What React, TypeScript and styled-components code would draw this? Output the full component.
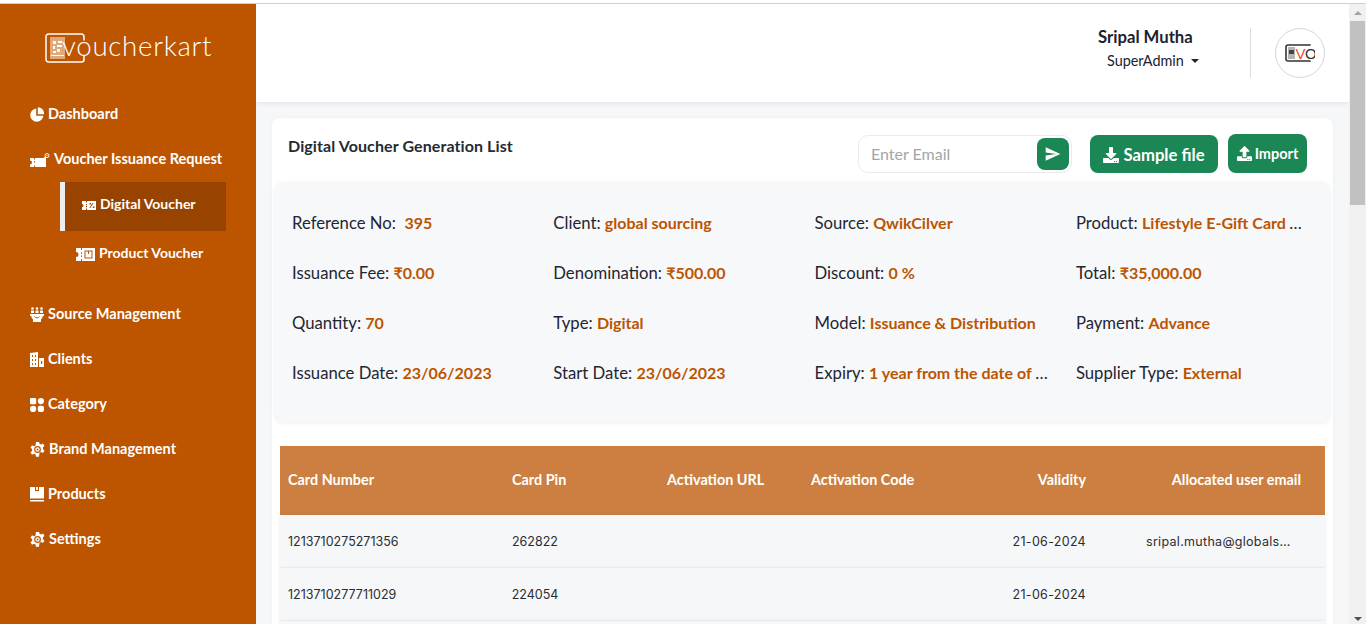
import React from 'react';
import styled, { createGlobalStyle } from 'styled-components';
import { FaDownload, FaUpload } from 'react-icons/fa';
import { IoMdSend } from 'react-icons/io';

const GlobalStyle = createGlobalStyle`
  html, body {
    margin: 0;
    padding: 0;
    height: 624px;
    overflow: hidden;
    background: #fff;
    font-family: "Lato", "Open Sans", sans-serif;
  }
  * { box-sizing: border-box; }
`;

const Page = styled.div`
  height: 624px;
  display: flex;
  flex-direction: column;
  overflow: hidden;
`;

const TopLine = styled.div`
  flex: 0 0 4px;
  background: #fff;
  border-bottom: 1px solid #cfcfcf;
`;

const Body = styled.div`
  flex: 1;
  display: flex;
  min-height: 0;
`;

const Sidebar = styled.aside`
  flex: 0 0 256px;
  background: #bc5400;
  color: #fff;
`;

const Logo = styled.div`
  display: flex;
  align-items: center;
  height: 30px;
  margin: 29px 0 0 45px;
`;

const LogoText = styled.span`
  font-size: 27.7px;
  font-weight: 300;
  letter-spacing: 0.7px;
  margin-left: -23px;
  padding-bottom: 4px;
  line-height: 30px;
  color: #fff;
`;

const Nav = styled.nav`
  margin-top: 29px;
  display: flex;
  flex-direction: column;
`;

const NavItem = styled.div`
  display: flex;
  align-items: center;
  height: 45px;
  padding: 0 0 2px 30px;
  gap: 4px;
  font-size: 14.5px;
  font-weight: 700;
  color: #fff;
  svg {
    flex: none;
    margin-top: 2px;
  }
`;

const SubItem = styled.div<{ $active?: boolean }>`
  display: flex;
  align-items: center;
  width: 166px;
  height: 49px;
  margin-left: 60px;
  padding: 0 0 6px ${(p) => (p.$active ? 17 : 11)}px;
  gap: 4px;
  font-size: 14px;
  font-weight: 700;
  color: #fff;
  background: ${(p) => (p.$active ? '#984300' : 'transparent')};
  border-left: 5px solid ${(p) => (p.$active ? '#eeeeee' : 'transparent')};
  svg {
    flex: none;
    margin-top: 3px;
  }
`;

const NavSpacer = styled.div`
  height: 12px;
`;

const Main = styled.main`
  flex: 1;
  min-width: 0;
  background: #f6f7f9;
  overflow: hidden;
`;

const Header = styled.header`
  height: 98px;
  background: #fff;
  box-shadow: 0 1px 6px rgba(30, 40, 60, 0.1);
  display: flex;
  align-items: center;
  justify-content: flex-end;
  padding-right: 24px;
`;

const UserBox = styled.div`
  width: 102px;
  margin: 0 50px 8px 0;
  display: flex;
  flex-direction: column;
  align-items: flex-start;
  color: #1b2230;
`;

const UserName = styled.div`
  font-size: 16.7px;
  font-weight: 700;
  line-height: 22px;
  white-space: nowrap;
`;

const UserRole = styled.div`
  display: flex;
  align-items: center;
  gap: 7px;
  font-size: 14.4px;
  line-height: 22px;
  margin: 2px 0 0 9px;
`;

const Caret = styled.span`
  width: 0;
  height: 0;
  border-left: 4px solid transparent;
  border-right: 4px solid transparent;
  border-top: 4px solid #222;
`;

const Divider = styled.div`
  width: 1px;
  height: 50px;
  background: #dcdee2;
  margin-right: 24px;
`;

const Avatar = styled.div`
  width: 50px;
  height: 50px;
  border-radius: 50%;
  border: 1px solid #d6d6d6;
  background: #fff;
  display: flex;
  align-items: center;
  justify-content: center;
`;

const Card = styled.section`
  margin: 16px 16px 0;
  background: #fff;
  border-radius: 8px;
  box-shadow: 0 0 4px rgba(30, 40, 60, 0.04);
`;

const CardHead = styled.div`
  height: 64px;
  display: flex;
  align-items: flex-start;
  padding: 16px 26px 0 16px;
`;

const Title = styled.h2`
  flex: 1;
  margin: 1px 0 0;
  font-size: 16px;
  font-weight: 700;
  letter-spacing: 0.1px;
  line-height: 22px;
  color: #252a33;
`;

const EmailBox = styled.div`
  width: 214px;
  height: 38px;
  margin-top: 1px;
  display: flex;
  align-items: center;
  padding: 0 2px 0 12px;
  border: 1px solid #e9ebee;
  border-radius: 10px;
  background: #fff;
`;

const EmailInput = styled.input`
  flex: 1;
  min-width: 0;
  padding: 0;
  margin-bottom: 2px;
  border: 0;
  outline: 0;
  background: transparent;
  font-family: inherit;
  font-size: 16px;
  color: #333;
  &::placeholder { color: #a3a5a8; opacity: 1; }
`;

const SendButton = styled.button`
  width: 32px;
  height: 32px;
  padding: 0;
  border: 0;
  border-radius: 8px;
  background: #1a8754;
  color: #fff;
  display: flex;
  align-items: center;
  justify-content: center;
`;

const ActionButton = styled.button<{ $small?: boolean }>`
  height: ${(p) => (p.$small ? 39 : 38)}px;
  width: ${(p) => (p.$small ? 79 : 128)}px;
  margin-left: ${(p) => (p.$small ? 10 : 18)}px;
  margin-top: ${(p) => (p.$small ? 0 : 1)}px;
  padding: ${(p) => (p.$small ? 0 : '2px 0 0')};
  border: 0;
  border-radius: 8px;
  background: #1a8754;
  color: #fff;
  font-family: inherit;
  font-weight: 700;
  font-size: ${(p) => (p.$small ? 14.5 : 16.7)}px;
  display: flex;
  align-items: center;
  justify-content: center;
  gap: ${(p) => (p.$small ? 3 : 4)}px;
`;

const InfoPanel = styled.div`
  margin: 0 3px;
  height: 240px;
  padding: 16px 0 0 17px;
  background: #f7f8fa;
  border-radius: 8px;
  box-shadow: 0 1px 4px rgba(30, 40, 60, 0.08);
  display: grid;
  grid-template-columns: repeat(4, 261.3px);
  grid-auto-rows: 50px;
`;

const InfoCell = styled.div`
  max-width: 235px;
  line-height: 50px;
  white-space: nowrap;
  overflow: hidden;
  text-overflow: ellipsis;
  font-size: 16.7px;
  color: #1f2633;
`;

const InfoValue = styled.span`
  color: #bc5400;
  font-size: 16px;
  font-weight: 700;
`;

const Table = styled.div`
  margin: 24px 8px 0;
`;

const COLUMNS = '231px 156px 144px 160px 115px 239px';

const HeadRow = styled.div`
  height: 69px;
  padding-bottom: 2px;
  display: grid;
  grid-template-columns: ${COLUMNS};
  align-items: center;
  background: #cc7f40;
  color: #fff;
  font-size: 14.4px;
  font-weight: 700;
`;

const DataRow = styled.div`
  height: 53px;
  display: grid;
  grid-template-columns: ${COLUMNS};
  align-items: center;
  background: #f6f7f9;
  border-bottom: 1px solid #f1f2f4;
  box-shadow: 0 0 3px rgba(30, 40, 60, 0.1);
  color: #2b2d31;
  font-family: "Inter", "Lato", sans-serif;
  font-size: 12.5px;
`;

const Cell = styled.div<{ $align?: string; $pad?: string }>`
  text-align: ${(p) => p.$align ?? 'left'};
  padding: ${(p) => p.$pad ?? '0'};
  min-width: 0;
  white-space: nowrap;
`;

const PinValue = styled.span`
  display: inline-block;
  width: 48px;
  text-align: center;
`;

const DateValue = styled.span`
  letter-spacing: 0.3px;
`;

const EmailValue = styled.span`
  display: inline-block;
  width: 151px;
  letter-spacing: 0.3px;
  overflow: hidden;
  text-overflow: ellipsis;
  vertical-align: bottom;
`;

const Scrollbar = styled.div`
  flex: 0 0 17px;
  background: #f1f1f1;
  display: flex;
  flex-direction: column;
  align-items: center;
`;

const ArrowUp = styled.span`
  margin-top: 7px;
  width: 0;
  height: 0;
  border-left: 4px solid transparent;
  border-right: 4px solid transparent;
  border-bottom: 4px solid #a3a3a3;
`;

const Thumb = styled.div`
  width: 15px;
  height: 184px;
  margin-top: 6px;
  background: #c1c1c1;
`;

const ArrowDown = styled.span`
  margin-top: auto;
  margin-bottom: 3px;
  width: 0;
  height: 0;
  border-left: 4px solid transparent;
  border-right: 4px solid transparent;
  border-top: 4px solid #505050;
`;

const LogoMark = () => (
  <svg width="40" height="30" viewBox="0 0 40 30" fill="none">
    <path d="M39 7.5V3.5A2.5 2.5 0 0 0 36.5 1H3.5A2.5 2.5 0 0 0 1 3.5V26.5A2.5 2.5 0 0 0 3.5 29H36.5A2.5 2.5 0 0 0 39 26.5V23" stroke="#fff" strokeWidth="1.5" />
    <rect x="5" y="4" width="15" height="22" fill="#e2a878" />
    <path d="M8 8h3v3H8zM13 8h4v2h-4zM8 13h2v3H8zM12 12h5v2h-5zM12 16h3v3h-3zM8 18h3v2H8zM6 22h13v1H6z" fill="#fff" />
  </svg>
);

const PieIcon = () => (
  <svg width="14" height="15" viewBox="0 0 14 15" fill="#fff">
    <path d="M6.2 1.6A6.6 6.6 0 1 0 13.4 8.8H6.2z" />
    <path d="M7.8 0.2A6.4 6.4 0 0 1 14 7.2H7.8z" />
  </svg>
);

const RequestIcon = () => (
  <svg width="20" height="14" viewBox="0 0 20 14" fill="#fff">
    <path d="M0 5h4v1.5h1V5h8l3-1.5V14H5v-1.5H4V14H0v-2.5a2 2 0 0 0 0-4z" />
    <path d="M4 8h1v1.5H4z" fill="#bc5400" />
    <circle cx="17" cy="2.6" r="2" fill="none" stroke="#fff" strokeWidth="1" />
    <circle cx="17" cy="2.6" r="0.6" />
  </svg>
);

const DigitalIcon = () => (
  <svg width="14" height="9" viewBox="0 0 14 9" fill="#fff">
    <path d="M0 0h4v1.5h1V0h9v9H5V7.5H4V9H0V6a1.5 1.5 0 0 0 0-3z" />
    <path d="M4 3h1v1.2H4zM4 5h1v1.2H4z" fill="#984300" />
    <path d="M7.5 2h1.6v1.6H7.5zM10.8 5.4h1.6V7h-1.6zM10.6 2h1L8.3 7h-1z" fill="#984300" />
  </svg>
);

const ProductIcon = () => (
  <svg width="19" height="13" viewBox="0 0 19 13" fill="#fff">
    <path d="M0 0h5v2h1V0h13v13H6v-2H5v2H0V9a2.5 2.5 0 0 0 0-5z" />
    <path d="M5 4.5h1V6H5zM5 7.5h1V9H5z" fill="#bc5400" />
    <path d="M8.5 2.5h8v8h-8z" fill="#bc5400" />
    <path d="M9.5 3.5h2.5v2.5h1V3.5h2.5v6h-6z" />
  </svg>
);

const SourceIcon = () => (
  <svg width="14" height="15" viewBox="0 0 14 15" fill="#fff">
    <circle cx="2.5" cy="1.5" r="1.3" />
    <circle cx="7" cy="1.5" r="1.3" />
    <circle cx="11.5" cy="1.5" r="1.3" />
    <path d="M1 3.5h3v2.5H1zM5.5 3.5h3v2.5h-3zM10 3.5h3v2.5h-3z" />
    <path d="M0 7h14v2h-1.2a6 6 0 0 1-1.8 3.5V15H3v-2.5A6 6 0 0 1 1.2 9H0z" />
    <path d="M4.5 9.5a3 3 0 0 0 5 0" stroke="#bc5400" strokeWidth="1" fill="none" />
  </svg>
);

const BuildingIcon = () => (
  <svg width="14" height="15" viewBox="0 0 14 15" fill="#fff">
    <path d="M0 1l8-1v15H0z" />
    <path d="M9 6h5v9H9z" />
    <path d="M2 3h1v2H2zM5 3h1v2H5zM2 7h1v2H2zM5 7h1v2H5zM2 11h1v2H2zM5 11h1v2H5zM11 9h1.2v3H11z" fill="#bc5400" />
  </svg>
);

const CategoryIcon = () => (
  <svg width="14" height="14" viewBox="0 0 14 14" fill="#fff">
    <rect x="0" y="0" width="6.2" height="6.2" rx="1" />
    <circle cx="10.9" cy="3.1" r="3.1" />
    <circle cx="3.1" cy="10.9" r="3.1" />
    <rect x="7.8" y="7.8" width="6.2" height="6.2" rx="2" />
  </svg>
);

const GearIcon = () => (
  <svg width="15" height="15" viewBox="0 0 15 15" fill="#fff">
    <path d="M6 0h3l.5 2 1.6.7L13 1.8l1.5 2.4-1.6 1.3v2l1.6 1.3-1.5 2.4-1.9-.9-1.6.8L9 15H6l-.5-2.1-1.6-.8-1.9.9L.5 10.6l1.6-1.3v-2L.5 6 2 3.6l1.9.9 1.6-.8z" transform="translate(0 -.3)" />
    <circle cx="7.5" cy="7.5" r="3.4" fill="#bc5400" />
    <circle cx="7.5" cy="7.5" r="2.2" fill="#fff" />
    <circle cx="7.5" cy="7.5" r="1" fill="#bc5400" />
  </svg>
);

const BoxIcon = () => (
  <svg width="14" height="15" viewBox="0 0 14 15" fill="#fff">
    <path d="M0 0h5v4h4V0h5v11.5H0zM0 13h14v1.5H0z" />
    <path d="M6 0h2v3H6z" />
  </svg>
);

const AvatarLogo = () => (
  <svg width="30" height="18" viewBox="0 0 30 18">
    <path d="M25 1.5V1H3a2 2 0 0 0-2 2v12a2 2 0 0 0 2 2h22v-.5" fill="none" stroke="#333" strokeWidth="1.6" />
    <rect x="3" y="3" width="7" height="12" fill="#b5b5b5" />
    <path d="M4 6h5v4H4z" fill="#444" />
    <text x="10.5" y="14.5" fontFamily="Liberation Sans, sans-serif" fontSize="15" fill="#e8502a">V</text>
    <text x="20" y="14.5" fontFamily="Liberation Sans, sans-serif" fontSize="15" fill="#333">O</text>
  </svg>
);

const infoRows: [string, string][] = [
  ['Reference No:\u00a0 ', '395'],
  ['Client: ', 'global sourcing'],
  ['Source: ', 'QwikCilver'],
  ['Product: ', 'Lifestyle E-Gift Card Voucher'],
  ['Issuance Fee: ', '₹0.00'],
  ['Denomination: ', '₹500.00'],
  ['Discount: ', '0 %'],
  ['Total: ', '₹35,000.00'],
  ['Quantity: ', '70'],
  ['Type: ', 'Digital'],
  ['Model: ', 'Issuance & Distribution'],
  ['Payment: ', 'Advance'],
  ['Issuance Date: ', '23/06/2023'],
  ['Start Date: ', '23/06/2023'],
  ['Expiry: ', '1 year from the date of issuance'],
  ['Supplier Type: ', 'External'],
];

const cards = [
  { number: '1213710275271356', pin: '262822', validity: '21-06-2024', email: 'sripal.mutha@globalsourcing.com' },
  { number: '1213710277711029', pin: '224054', validity: '21-06-2024', email: '' },
  { number: '', pin: '', validity: '', email: '' },
];

export default function App() {
  return (
    <Page>
      <GlobalStyle />
      <TopLine />
      <Body>
        <Sidebar>
          <Logo>
            <LogoMark />
            <LogoText>voucherkart</LogoText>
          </Logo>
          <Nav>
            <NavItem>
              <PieIcon />
              Dashboard
            </NavItem>
            <NavItem>
              <RequestIcon />
              Voucher Issuance Request
            </NavItem>
            <SubItem $active>
              <DigitalIcon />
              Digital Voucher
            </SubItem>
            <SubItem>
              <ProductIcon />
              Product Voucher
            </SubItem>
            <NavSpacer />
            <NavItem>
              <SourceIcon />
              Source Management
            </NavItem>
            <NavItem>
              <BuildingIcon />
              Clients
            </NavItem>
            <NavItem>
              <CategoryIcon />
              Category
            </NavItem>
            <NavItem>
              <GearIcon />
              Brand Management
            </NavItem>
            <NavItem>
              <BoxIcon />
              Products
            </NavItem>
            <NavItem>
              <GearIcon />
              Settings
            </NavItem>
          </Nav>
        </Sidebar>
        <Main>
          <Header>
            <UserBox>
              <UserName>Sripal Mutha</UserName>
              <UserRole>
                SuperAdmin
                <Caret />
              </UserRole>
            </UserBox>
            <Divider />
            <Avatar>
              <AvatarLogo />
            </Avatar>
          </Header>
          <Card>
            <CardHead>
              <Title>Digital Voucher Generation List</Title>
              <EmailBox>
                <EmailInput placeholder="Enter Email" />
                <SendButton>
                  <IoMdSend size={18} />
                </SendButton>
              </EmailBox>
              <ActionButton>
                <FaDownload size={16} />
                Sample file
              </ActionButton>
              <ActionButton $small>
                <FaUpload size={15} />
                Import
              </ActionButton>
            </CardHead>
            <InfoPanel>
              {infoRows.map(([label, value]) => (
                <InfoCell key={label}>
                  {label}
                  <InfoValue>{value}</InfoValue>
                </InfoCell>
              ))}
            </InfoPanel>
            <Table>
              <HeadRow>
                <Cell $pad="0 0 0 8px">Card Number</Cell>
                <Cell $pad="0 0 0 1px">Card Pin</Cell>
                <Cell>Activation URL</Cell>
                <Cell>Activation Code</Cell>
                <Cell $align="right">Validity</Cell>
                <Cell $align="right" $pad="0 24px 0 0">
                  Allocated user email
                </Cell>
              </HeadRow>
              {cards.map((card, i) => (
                <DataRow key={i}>
                  <Cell $pad="0 0 0 8px">{card.number}</Cell>
                  <Cell>
                    <PinValue>{card.pin}</PinValue>
                  </Cell>
                  <Cell />
                  <Cell />
                  <Cell $align="right">
                    <DateValue>{card.validity}</DateValue>
                  </Cell>
                  <Cell $align="right" $pad="0 28px 0 0">
                    {card.email && <EmailValue>{card.email}</EmailValue>}
                  </Cell>
                </DataRow>
              ))}
            </Table>
          </Card>
        </Main>
        <Scrollbar>
          <ArrowUp />
          <Thumb />
          <ArrowDown />
        </Scrollbar>
      </Body>
    </Page>
  );
}
